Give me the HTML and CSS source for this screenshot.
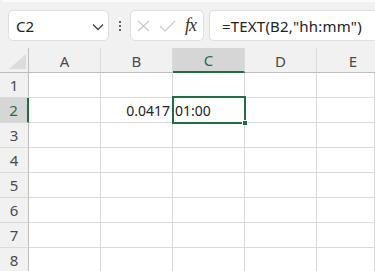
FILE: index.html
```html
<!DOCTYPE html>
<html lang="ja">
<head>
<meta charset="utf-8">
<link rel="stylesheet" href="styles.css">
</head>
<body>
<div class="app">
  <div class="toolbar">
    <div class="ribbon-edge"></div>
    <div class="formula-row">
      <div class="namebox">
        <span class="namebox-text">C2</span>
        <svg class="chevron" width="12" height="8" viewBox="0 0 12 8"><polyline points="1,1.5 6,6.5 11,1.5" fill="none" stroke="#444" stroke-width="1.3"/></svg>
      </div>
      <div class="vdots"><span></span><span></span><span></span></div>
      <div class="fxbox">
        <svg class="icon" width="13" height="12" viewBox="0 0 13 12"><path d="M1 1 L12 11 M12 1 L1 11" stroke="#c8c8c8" stroke-width="1.1" fill="none"/></svg>
        <svg class="icon" width="17" height="12" viewBox="0 0 17 12"><polyline points="1,6 6,11 16,1" stroke="#c8c8c8" stroke-width="1.1" fill="none"/></svg>
        <span class="fx">fx</span>
      </div>
      <div class="formula">=TEXT(B2,"hh:mm")</div>
    </div>
  </div>
  <div class="grid">
    <div class="corner"><span class="tri"></span></div>
    <div class="colhead">A</div>
    <div class="colhead">B</div>
    <div class="colhead sel">C</div>
    <div class="colhead">D</div>
    <div class="colhead edge">E</div>

    <div class="rowhead">1</div>
    <div class="cell"></div><div class="cell"></div><div class="cell"></div><div class="cell"></div><div class="cell"></div>

    <div class="rowhead sel">2</div>
    <div class="cell"></div>
    <div class="cell num">0.0417</div>
    <div class="cell active">01:00<span class="selbox"><span class="handle"></span></span></div>
    <div class="cell"></div><div class="cell"></div>

    <div class="rowhead">3</div>
    <div class="cell"></div><div class="cell"></div><div class="cell"></div><div class="cell"></div><div class="cell"></div>
    <div class="rowhead">4</div>
    <div class="cell"></div><div class="cell"></div><div class="cell"></div><div class="cell"></div><div class="cell"></div>
    <div class="rowhead">5</div>
    <div class="cell"></div><div class="cell"></div><div class="cell"></div><div class="cell"></div><div class="cell"></div>
    <div class="rowhead">6</div>
    <div class="cell"></div><div class="cell"></div><div class="cell"></div><div class="cell"></div><div class="cell"></div>
    <div class="rowhead">7</div>
    <div class="cell"></div><div class="cell"></div><div class="cell"></div><div class="cell"></div><div class="cell"></div>
    <div class="rowhead">8</div>
    <div class="cell"></div><div class="cell"></div><div class="cell"></div><div class="cell"></div><div class="cell"></div>
  </div>
</div>
</body>
</html>
```
FILE: styles.css
```css
* { box-sizing: border-box; }
html, body { margin: 0; padding: 0; }
body {
  width: 375px;
  height: 271px;
  overflow: hidden;
  background: #ffffff;
  font-family: "Noto Sans", "Noto Sans CJK JP", sans-serif;
  color: #222;
}
.app { width: 375px; overflow: hidden; }
.toolbar {
  background: #f1f1f1;
  height: 48px;
}
.ribbon-edge {
  height: 2px;
  margin-left: 2px;
  background: #fbfbfb;
  border-bottom-left-radius: 6px;
}
.formula-row {
  display: flex;
  align-items: stretch;
  margin-top: 8px;
  height: 31px;
  padding-left: 8px;
}
.namebox {
  width: 101px;
  background: #fff;
  border: 1px solid #dedede;
  border-radius: 5px;
  display: flex;
  align-items: center;
  justify-content: space-between;
  padding: 0 4px 0 7px;
}
.namebox-text { font-size: 15px; color: #222; }
.chevron { margin-top: 2px; }
.vdots {
  width: 21px;
  display: flex;
  flex-direction: column;
  align-items: center;
  justify-content: center;
  gap: 2px;
}
.vdots span { width: 2px; height: 2px; background: #333; border-radius: 1px; }
.fxbox {
  width: 74px;
  background: #fff;
  border: 1px solid #dedede;
  border-radius: 5px;
  display: flex;
  align-items: center;
  padding-left: 6px;
  gap: 9px;
}
.fx {
  font-family: "Liberation Serif", serif;
  font-style: italic;
  font-size: 18px;
  color: #333;
  margin-left: 0;
  letter-spacing: -1px;
}
.formula {
  flex: 1;
  margin-left: 5px;
  background: #fff;
  border: 1px solid #dedede;
  border-right: none;
  border-radius: 5px 0 0 5px;
  padding-left: 12px;
  display: flex;
  align-items: center;
  font-size: 15px;
  color: #222;
  white-space: nowrap;
  letter-spacing: 0.2px;
}
.grid {
  display: grid;
  grid-template-columns: 29px repeat(4, 72px) 58px;
  grid-template-rows: repeat(9, 25px);
  width: 375px;
}
.corner, .colhead, .rowhead {
  background: #f1f1f1;
  color: #4a4a4a;
  font-size: 15px;
  display: flex;
  align-items: center;
  justify-content: center;
}
.corner {
  border-right: 1px solid #bdbdbd;
  border-bottom: 1px solid #bdbdbd;
  position: relative;
}
.tri {
  position: absolute;
  right: 2px;
  bottom: 3px;
  width: 0;
  height: 0;
  border-left: 17px solid transparent;
  border-bottom: 15px solid #dcdcdc;
}
.colhead {
  border-right: 1px solid #dadada;
  border-bottom: 1px solid #bdbdbd;
  padding-top: 1px;
}
.colhead.edge { padding-left: 14px; border-right: none; }
.colhead.sel {
  background: #d6d6d6;
  color: #1f6e43;
  border-bottom: 2px solid #1f6e43;
}
.rowhead {
  border-right: 1px solid #bdbdbd;
  border-bottom: 1px solid #dadada;
}
.rowhead.sel {
  background: #d6d6d6;
  color: #1f6e43;
  border-right: 2px solid #1f6e43;
}
.cell {
  border-right: 1px solid #dadada;
  border-bottom: 1px solid #dadada;
  font-family: "Noto Sans", sans-serif;
  font-size: 14px;
  color: #222;
  display: flex;
  align-items: center;
  padding: 1px 2px 0;
}
.cell.num { justify-content: flex-end; }
.cell.active { position: relative; }
.selbox {
  position: absolute;
  left: -1px;
  top: -2px;
  width: 74px;
  height: 28px;
  border: 2px solid #1f6e43;
}
.handle {
  position: absolute;
  right: -4px;
  bottom: -4px;
  width: 6px;
  height: 6px;
  background: #1f6e43;
  border: 1px solid #fff;
}
```
